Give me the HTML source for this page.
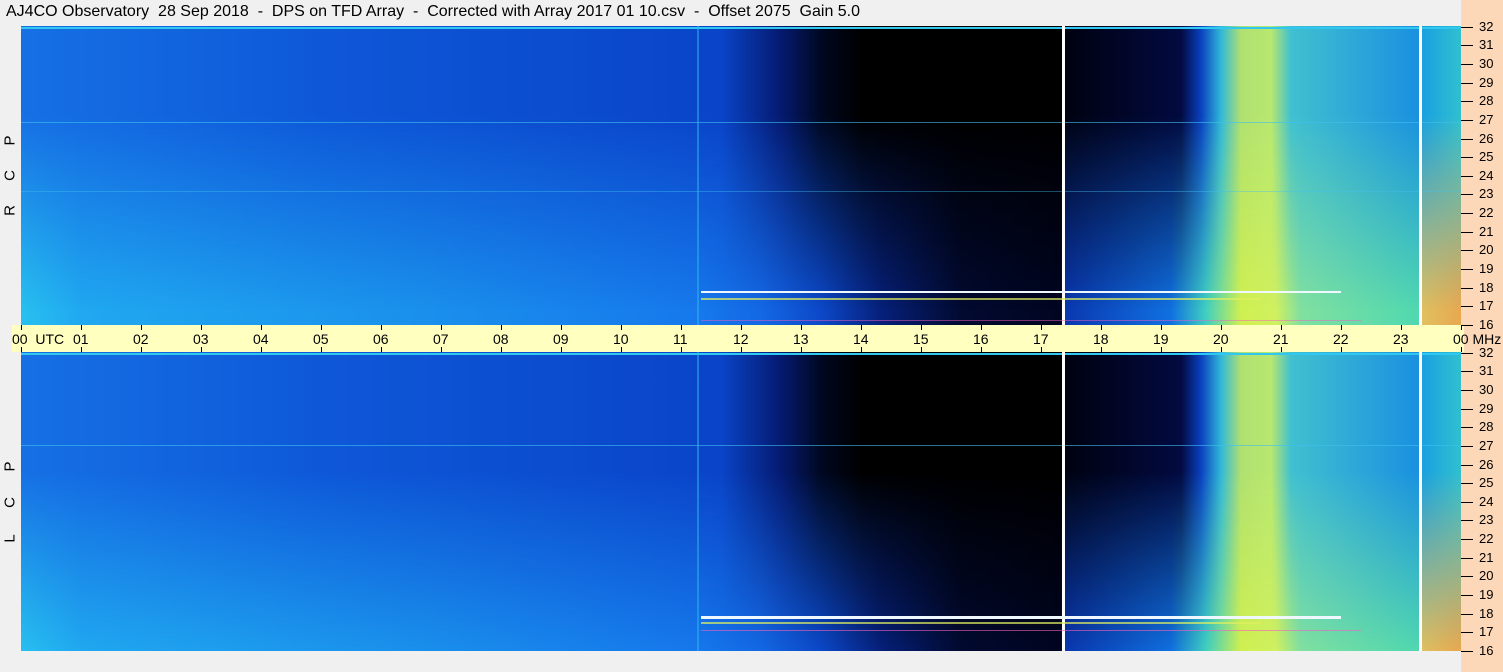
<!DOCTYPE html>
<html><head><meta charset="utf-8"><style>
*{margin:0;padding:0;box-sizing:border-box}
body{width:1503px;height:672px;background:#f0f0f0;position:relative;overflow:hidden;font-family:"Liberation Sans",sans-serif}
.title{position:absolute;left:6px;top:3px;font-size:16px;color:#000;white-space:pre}
.peach{position:absolute;left:1461px;top:0;width:42px;height:672px;background:#fdd8b8}
.plot{position:absolute;left:21px;width:1440px;height:299px;overflow:hidden}
.p1{top:26px}
.p2{top:352px}
.lay{position:absolute;left:0;top:0;width:100%;height:100%}
.bot{background:linear-gradient(to right,#28c0f0 0px,#20a8f0 60px,#1a90ec 400px,#1678ec 680px,#1468e4 740px,#0c48c8 800px,#06207a 860px,#020a30 940px,#010520 1040px,#0a38b0 1044px,#1070e0 1150px,#40d0c0 1185px,#d0f050 1220px,#d0f060 1255px,#80e0a0 1280px,#50d8b0 1398px,#e0c060 1401px,#e8a850 1440px)}
.top{background:linear-gradient(to right,#1670e4 0px,#0e58d8 300px,#0a44c8 700px,#051a70 760px,#000820 800px,#000 840px,#000 1040px,#000210 1044px,#020a40 1160px,#0a40c0 1180px,#30b8d8 1200px,#b0e070 1220px,#b8e870 1250px,#40c0d0 1270px,#1a90e0 1398px,#18a0e0 1401px,#30c0d0 1440px);
-webkit-mask-image:linear-gradient(to bottom,#000 0%,#000 30%,transparent 95%);mask-image:linear-gradient(to bottom,#000 0%,#000 30%,transparent 95%)}
.p2 .top{-webkit-mask-image:linear-gradient(to bottom,#000 0%,#000 40%,transparent 100%);mask-image:linear-gradient(to bottom,#000 0%,#000 40%,transparent 100%)}
.l{position:absolute;left:0;right:0}
.v{position:absolute;top:0;bottom:0}
.axis{position:absolute;left:12px;top:325px;width:1452px;height:27px;background:#ffffc0}
.axis span{position:absolute;top:6px;font-size:14px;white-space:nowrap}
.ry{position:absolute;left:1461px;font-size:13px}
.ry span{position:absolute;left:18px;top:-8px}
.ry i{position:absolute;left:0;top:0;width:12px;height:1px;background:#000}
.vl{position:absolute;left:3px;font-size:15px;width:14px;text-align:center;transform:rotate(-90deg)}
</style></head><body>
<div class="title">AJ4CO Observatory  28 Sep 2018  -  DPS on TFD Array  -  Corrected with Array 2017 01 10.csv  -  Offset 2075  Gain 5.0</div>
<div class="peach"></div>

<div class="plot p1"><div class="lay bot"></div><div class="lay top"></div>
<div class="l" style="top:1px;height:2px;background:#30c8f0"></div>
<div class="l" style="top:96px;height:1px;background:#40c0f0;opacity:.6"></div>
<div class="l" style="top:165px;height:1px;background:#40c0f0;opacity:.4"></div>
<div class="v" style="left:676px;width:2px;background:#30b8f0;opacity:.5"></div>
<div class="v" style="left:1041px;width:3px;background:#fff"></div>
<div class="v" style="left:1398px;width:3px;background:#fff"></div>
<div class="l" style="top:265px;height:2px;left:680px;right:120px;background:#f0f8ff"></div>
<div class="l" style="top:272px;height:2px;left:680px;right:200px;background:#e0f060;opacity:.7"></div>
<div class="l" style="top:294px;height:1px;left:680px;right:100px;background:#f060c0;opacity:.5"></div>
</div>
<div class="plot p2"><div class="lay bot"></div><div class="lay top"></div>
<div class="l" style="top:1px;height:2px;background:#30c8f0"></div>
<div class="l" style="top:93px;height:1px;background:#40c0f0;opacity:.6"></div>
<div class="v" style="left:676px;width:2px;background:#30b8f0;opacity:.5"></div>
<div class="v" style="left:1041px;width:3px;background:#fff"></div>
<div class="v" style="left:1398px;width:3px;background:#fff"></div>
<div class="l" style="top:264px;height:3px;left:680px;right:120px;background:#f0f8ff"></div>
<div class="l" style="top:270px;height:2px;left:680px;right:200px;background:#e0f060;opacity:.7"></div>
<div class="l" style="top:278px;height:1px;left:680px;right:100px;background:#f060c0;opacity:.6"></div>
</div>

<div class="axis">
<span style="left:0">00&nbsp;&nbsp;UTC</span>
<span style="left:61px">01</span><span style="left:121px">02</span><span style="left:181px">03</span><span style="left:241px">04</span><span style="left:301px">05</span><span style="left:361px">06</span><span style="left:421px">07</span><span style="left:481px">08</span><span style="left:541px">09</span><span style="left:601px">10</span><span style="left:661px">11</span><span style="left:721px">12</span><span style="left:781px">13</span><span style="left:841px">14</span><span style="left:901px">15</span><span style="left:961px">16</span><span style="left:1021px">17</span><span style="left:1081px">18</span><span style="left:1141px">19</span><span style="left:1201px">20</span><span style="left:1261px">21</span><span style="left:1321px">22</span><span style="left:1381px">23</span><span style="left:1441px">00 MHz</span>
</div>

<div class="vl" style="top:132px">P</div><div class="vl" style="top:167px">C</div><div class="vl" style="top:202px">R</div>
<div class="vl" style="top:458px">P</div><div class="vl" style="top:494px">C</div><div class="vl" style="top:530px">L</div>

<div class="ry" style="top:27px"><i></i><span>32</span></div><div class="ry" style="top:45px"><i></i><span>31</span></div><div class="ry" style="top:64px"><i></i><span>30</span></div><div class="ry" style="top:83px"><i></i><span>29</span></div><div class="ry" style="top:101px"><i></i><span>28</span></div><div class="ry" style="top:120px"><i></i><span>27</span></div><div class="ry" style="top:139px"><i></i><span>26</span></div><div class="ry" style="top:157px"><i></i><span>25</span></div><div class="ry" style="top:176px"><i></i><span>24</span></div><div class="ry" style="top:194px"><i></i><span>23</span></div><div class="ry" style="top:213px"><i></i><span>22</span></div><div class="ry" style="top:232px"><i></i><span>21</span></div><div class="ry" style="top:250px"><i></i><span>20</span></div><div class="ry" style="top:269px"><i></i><span>19</span></div><div class="ry" style="top:288px"><i></i><span>18</span></div><div class="ry" style="top:306px"><i></i><span>17</span></div><div class="ry" style="top:325px"><i></i><span>16</span></div>
<div class="ry" style="top:353px"><i></i><span>32</span></div><div class="ry" style="top:371px"><i></i><span>31</span></div><div class="ry" style="top:390px"><i></i><span>30</span></div><div class="ry" style="top:409px"><i></i><span>29</span></div><div class="ry" style="top:427px"><i></i><span>28</span></div><div class="ry" style="top:446px"><i></i><span>27</span></div><div class="ry" style="top:465px"><i></i><span>26</span></div><div class="ry" style="top:483px"><i></i><span>25</span></div><div class="ry" style="top:502px"><i></i><span>24</span></div><div class="ry" style="top:520px"><i></i><span>23</span></div><div class="ry" style="top:539px"><i></i><span>22</span></div><div class="ry" style="top:558px"><i></i><span>21</span></div><div class="ry" style="top:576px"><i></i><span>20</span></div><div class="ry" style="top:595px"><i></i><span>19</span></div><div class="ry" style="top:614px"><i></i><span>18</span></div><div class="ry" style="top:632px"><i></i><span>17</span></div><div class="ry" style="top:651px"><i></i><span>16</span></div>

<div style="position:absolute;left:21px;top:325px;width:1441px;height:5px;background:repeating-linear-gradient(to right,#000 0,#000 1px,transparent 1px,transparent 60px)"></div>
<div style="position:absolute;left:21px;top:347px;width:1441px;height:5px;background:repeating-linear-gradient(to right,#000 0,#000 1px,transparent 1px,transparent 60px)"></div>
</body></html>
